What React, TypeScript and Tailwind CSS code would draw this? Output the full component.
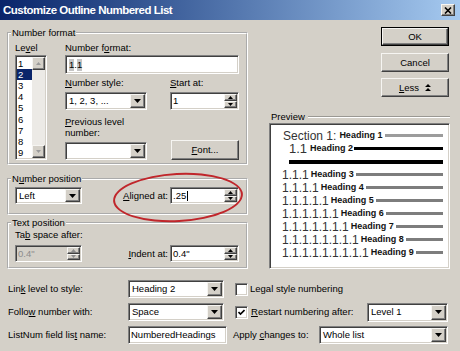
import React from "react"

const sunken =
	"border border-t-[#808080] border-l-[#808080] border-b-white border-r-white shadow-[inset_1px_1px_0_#404040,inset_-1px_-1px_0_#d4d0c8]"
const raised =
	"bg-[#d4d0c8] border border-t-[#f6f5f2] border-l-[#f6f5f2] border-b-[#404040] border-r-[#404040] shadow-[inset_-1px_-1px_0_#808080]"
const group = "border-2 border-white [border-style:groove]"

const Tri = ({ up = false, color = "#000", small = false }: { up?: boolean; color?: string; small?: boolean }) => {
	const w = small ? 5 : 7
	const h = small ? 3 : 4
	return (
		<svg width={w} height={h} viewBox={`0 0 ${w} ${h}`} className="block">
			<path d={up ? `M${w / 2} 0L${w} ${h}H0z` : `M0 0h${w}L${w / 2} ${h}z`} fill={color} />
		</svg>
	)
}

const Select = ({ value, className = "" }: { value?: string; className?: string }) => (
	<div className={`flex bg-white p-px ${sunken} ${className}`}>
		<span className="flex flex-1 items-center overflow-hidden whitespace-nowrap pl-[2px]">{value}</span>
		<span className={`flex w-[15px] items-center justify-center ${raised}`}>
			<Tri />
		</span>
	</div>
)

const Spin = ({
	children,
	disabled = false,
	className = "",
}: {
	children?: React.ReactNode
	disabled?: boolean
	className?: string
}) => (
	<div className={`flex p-px ${sunken} ${disabled ? "bg-[#d4d0c8] text-[#8c8c8c]" : "bg-white"} ${className}`}>
		<span className="flex flex-1 items-center pl-px">{children}</span>
		<span className="flex w-[13px] flex-col">
			<span className={`flex flex-1 items-center justify-center ${raised}`}>
				<Tri up small color={disabled ? "#8c8c8c" : "#000"} />
			</span>
			<span className={`flex flex-1 items-center justify-center ${raised}`}>
				<Tri small color={disabled ? "#8c8c8c" : "#000"} />
			</span>
		</span>
	</div>
)

const Button = ({
	children,
	isDefault = false,
	className = "",
}: {
	children: React.ReactNode
	isDefault?: boolean
	className?: string
}) => (
	<div className={`${isDefault ? "border border-black" : ""} ${className}`}>
		<div className={`flex h-full items-center justify-center ${raised}`}>{children}</div>
	</div>
)

const Checkbox = ({ checked = false }: { checked?: boolean }) => (
	<span className={`flex h-[13px] w-[13px] shrink-0 items-center justify-center bg-white ${sunken}`}>
		{checked && (
			<svg width="7" height="7" viewBox="0 0 7 7">
				<path d="M0.5 3l2 2 4-4" stroke="#000" strokeWidth="1.6" fill="none" />
			</svg>
		)}
	</span>
)

const GroupBox = ({
	title,
	children,
	className = "",
}: {
	title: React.ReactNode
	children: React.ReactNode
	className?: string
}) => (
	<fieldset className={`${group} w-[241px] pl-[6px] pr-[7px] ${className}`}>
		<legend className="-ml-[4px] px-px leading-[12px]">{title}</legend>
		{children}
	</fieldset>
)

const Field = ({ children }: { children: React.ReactNode }) => (
	<span className="bg-[#c4c4c4]">{children}</span>
)

export default function App() {
	const levels = [3, 4, 5, 6, 7, 8, 9]

	return (
		<div className="relative flex h-[351px] w-[460px] flex-col overflow-hidden bg-[#d4d0c8] font-['Liberation_Sans',Arial,sans-serif] text-[9.5px] leading-[12px] text-black">
			{/* title bar */}
			<div className="flex h-[20px] shrink-0 items-center bg-linear-to-r from-[#0a246a] to-[#a6caf0] pl-[3px]">
				<span className="text-[11.5px] font-bold tracking-[-0.5px] text-white">Customize Outline Numbered List</span>
				<span className={`ml-auto mr-[5px] flex h-[12px] w-[14px] items-center justify-center ${raised}`}>
					<svg width="8" height="7" viewBox="0 0 8 7">
						<path d="M1 0.5l6 6M7 0.5l-6 6" stroke="#000" strokeWidth="1.6" />
					</svg>
				</span>
			</div>

			{/* upper part */}
			<div className="flex pl-[7px] pt-[7px]">
				<div className="flex flex-col">
					<GroupBox title="Number format" className="pb-[3px] pt-[3px]">
						<div className="flex gap-[18px]">
							<div className="flex w-[32px] flex-col">
								<div className="h-[12px]">
									Le<u>v</u>el
								</div>
								<div className={`mt-px flex h-[105px] bg-white p-px ${sunken}`}>
									<div className="flex flex-1 flex-col pt-[1px]">
										{[1, 2, 3, 4, 5, 6, 7, 8, 9].map((n) => (
											<span
												key={n}
												className={`flex h-[11.2px] items-center pl-px ${n === 2 ? "bg-[#0a246a] text-white" : ""}`}
											>
												{n}
											</span>
										))}
									</div>
									<div className="flex w-[13px] flex-col bg-[#eceae6]">
										<span className={`flex h-[13px] items-center justify-center ${raised}`}>
											<Tri up color="#9a9a9a" small />
										</span>
										<span className="flex-1" />
										<span className={`flex h-[13px] items-center justify-center ${raised}`}>
											<Tri color="#9a9a9a" small />
										</span>
									</div>
								</div>
							</div>

							<div className="flex w-[174px] flex-col">
								<div className="h-[12px]">
									Number f<u>o</u>rmat:
								</div>
								<div className={`mt-px flex h-[19px] items-center bg-white px-[3px] ${sunken}`}>
									<Field>1</Field>.<Field>1</Field>
								</div>
								<div className="mt-[3px] grid grid-cols-[82px_69px] gap-x-[23px]">
									<div className="h-[12px]">
										<u>N</u>umber style:
									</div>
									<div className="h-[12px]">
										<u>S</u>tart at:
									</div>
									<Select value="1, 2, 3, ..." className="mt-[3px] h-[18px]" />
									<Spin className="mt-[3px] h-[18px]">1</Spin>
								</div>
								<div className="mt-[6px] flex items-end">
									<div className="flex w-[82px] flex-col">
										<div className="leading-[11px]">
											<u>P</u>revious level
											<br />
											number:
										</div>
										<Select className="mt-[4px] h-[18px]" />
									</div>
									<Button className="ml-[24px] h-[20px] w-[68px]">
										<span>
											<u>F</u>ont...
										</span>
									</Button>
								</div>
							</div>
						</div>
					</GroupBox>

					<GroupBox
						title={
							<>
								N<u>u</u>mber position
							</>
						}
						className="mt-[8px] pb-[9px] pt-[2px]"
					>
						<div className="flex h-[17px]">
							<Select value="Left" className="h-full w-[67px]" />
							<span className="flex flex-1 items-center justify-end pr-[2px]">
								<u>A</u>ligned at:
							</span>
							<Spin className="h-full w-[69px]">
								.25<span className="ml-px inline-block h-[10px] w-px bg-black align-middle" />
							</Spin>
						</div>
					</GroupBox>

					<GroupBox title="Text position" className="mt-[2px] pb-[5px]">
						<div className="h-[12px]">
							Ta<u>b</u> space after:
						</div>
						<div className="mt-[4px] flex h-[17px]">
							<Spin disabled className="h-full w-[67px]">
								0.4"
							</Spin>
							<span className="flex flex-1 items-center justify-end pr-[2px]">
								<u>I</u>ndent at:
							</span>
							<Spin className="h-full w-[69px]">0.4"</Spin>
						</div>
					</GroupBox>
				</div>

				<div className="ml-[21px] flex w-[181px] flex-col">
					<Button isDefault className="ml-auto mr-px h-[19px] w-[68px]">
						OK
					</Button>
					<Button className="ml-auto mr-px mt-[7px] h-[19px] w-[68px]">Cancel</Button>
					<Button className="ml-auto mr-px mt-[6px] h-[19px] w-[68px]">
						<span className="flex items-center gap-[6px]">
							<span>
								<u>L</u>ess
							</span>
							<svg width="6" height="7" viewBox="0 0 6 7">
								<path d="M3 0L6 3H0zM3 4L6 7H0z" fill="#000" />
							</svg>
						</span>
					</Button>

					<div className="mt-[14px] flex h-[12px] items-center">
						<span className="pl-[2px] pr-[3px]">Preview</span>
						<span className="h-[2px] flex-1 border-t border-b border-t-[#9a9893] border-b-white" />
					</div>
					<div className={`flex h-[146px] flex-col bg-white p-px pr-[6px] pt-[5px] ${sunken}`}>
						<div className="flex h-[13px] items-center pl-[12px]">
							<span className="text-[12px] leading-none text-[#333]">Section 1:</span>
							<span className="ml-[3px] text-[9px] font-bold leading-none text-[#111]">Heading 1</span>
							<span className="ml-[3px] h-[3px] flex-1 bg-[#9c9c9c]" />
						</div>
						<div className="flex h-[13px] items-center pl-[18px]">
							<span className="text-[13px] leading-none text-[#333]">1.1</span>
							<span className="ml-[3px] text-[9px] font-bold leading-none text-[#111]">Heading 2</span>
							<span className="ml-px h-[3px] flex-1 bg-black" />
						</div>
						<div className="flex h-[13px] items-center pl-[18px]">
							<span className="h-[4px] flex-1 bg-black" />
						</div>
						{levels.map((n) => (
							<div key={n} className="flex h-[13px] items-center pl-[11px]">
								<span className="text-[12px] leading-none text-[#333]">{Array(n).fill("1").join(".")}</span>
								<span className="ml-[2px] text-[9px] font-bold leading-none text-[#111]">Heading {n}</span>
								<span className="ml-[2px] h-[3px] flex-1 bg-[#7d7d7d]" />
							</div>
						))}
					</div>
				</div>
			</div>

			{/* bottom options */}
			<div className="mt-[11px] flex flex-col gap-[5px] pl-[8px] pr-[12px]">
				<div className="flex h-[18px] items-center">
					<span className="w-[120px]">
						Lin<u>k</u> level to style:
					</span>
					<Select value="Heading 2" className="h-full w-[96px]" />
					<span className="ml-[11px]">
						<Checkbox />
					</span>
					<span className="ml-[2px]">Legal style numbering</span>
				</div>
				<div className="flex h-[18px] items-center">
					<span className="w-[120px]">
						Follo<u>w</u> number with:
					</span>
					<Select value="Space" className="h-full w-[96px]" />
					<span className="ml-[11px]">
						<Checkbox checked />
					</span>
					<span className="ml-[3px]">
						<u>R</u>estart numbering after:
					</span>
					<Select value="Level 1" className="ml-auto h-[19px] w-[81px]" />
				</div>
				<div className="flex h-[18px] items-center">
					<span className="w-[120px]">
						ListNum field lis<u>t</u> name:
					</span>
					<div className={`flex h-full w-[99px] items-center bg-white px-[2px] ${sunken}`}>NumberedHeadings</div>
					<span className="ml-[6px]">
						Apply <u>c</u>hanges to:
					</span>
					<Select value="Whole list" className="ml-auto h-full w-[129px]" />
				</div>
			</div>

			{/* annotation */}
			<div className="pointer-events-none absolute left-[113px] top-[173px] h-[49px] w-[130px] -rotate-3 rounded-[50%] border-2 border-[#c0262b]" />
		</div>
	)
}
